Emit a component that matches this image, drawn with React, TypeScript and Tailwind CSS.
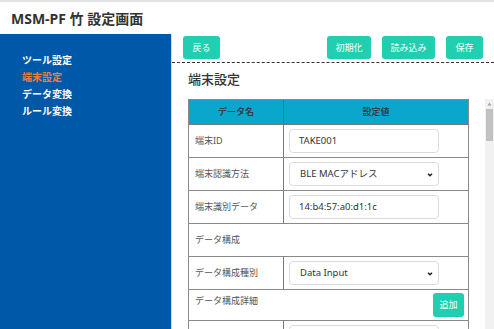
import React from 'react';

const font = "font-['Noto_Sans','Noto_Sans_CJK_JP',sans-serif]";

const Btn: React.FC<{ label: string; w: string }> = ({ label, w }) => (
  <button className={`${w} h-[23px] rounded-[3px] bg-[#1fcfaf] text-[9px] leading-none text-white`}>{label}</button>
);

const Chevron = () => (
  <svg width="6" height="4" viewBox="0 0 6 4" className="absolute right-[5px] top-[10px]">
    <path d="M1 0.8l2 2 2-2" fill="none" stroke="#222" strokeWidth="1.5" />
  </svg>
);

const Field: React.FC<{ value: string; select?: boolean }> = ({ value, select }) => (
  <div className="relative flex h-[24px] w-[150px] items-center rounded-[4px] border border-[#dcdcdc] pl-[9px] text-[9.5px] text-[#333]">
    <span className={select ? 'pl-[1px]' : ''}>{value}</span>
    {select && <Chevron />}
  </div>
);

const Row: React.FC<{ label: string; children?: React.ReactNode }> = ({ label, children }) => (
  <div className="flex h-[33px] border-b border-[#8a8a8a]">
    <div className="flex w-[95px] items-center border-r border-[#777] pl-[6px] text-[9px] text-[#555]">{label}</div>
    <div className="flex flex-1 items-center pl-[5px]">{children}</div>
  </div>
);

export default function App() {
  return (
    <div className={`flex h-[329px] w-[494px] flex-col overflow-hidden bg-white ${font}`}>
      <header className="flex h-[34px] items-center border-t-2 border-[#e2e2e2] pl-[11px]">
        <h1 className="text-[14px] font-bold text-[#333]">MSM-PF 竹 設定画面</h1>
      </header>

      <div className="flex min-h-0 flex-1">
        <aside className="flex w-[172px] flex-col border-r border-[#d6d6d6] bg-[#0059a8] pl-[22px] pt-[18px]">
          {['ツール設定', '端末設定', 'データ変換', 'ルール変換'].map((item) => (
            <div
              key={item}
              className={`text-[10px] font-bold leading-[17px] ${item === '端末設定' ? 'text-[#f27a45]' : 'text-white'}`}
            >
              {item}
            </div>
          ))}
        </aside>

        <main className="flex min-w-0 flex-1 flex-col">
          <div className="flex gap-[11px] border-b border-dashed border-[#333] px-[11px] pb-[3px] pt-[2px]">
            <Btn label="戻る" w="w-[37px]" />
            <div className="flex-1" />
            <Btn label="初期化" w="w-[44px]" />
            <Btn label="読み込み" w="w-[53px]" />
            <Btn label="保存" w="w-[37px]" />
          </div>

          <h2 className="pl-[16px] pt-[8px] text-[13px] font-medium leading-[16px] text-[#333]">端末設定</h2>

          <div className="mt-[12px] flex min-h-0 flex-1">
            <div className="flex-1 overflow-hidden px-[16px]">
              <div className="border-x border-t border-[#8a8a8a]">
                <div className="flex h-[25px] border-b border-[#777] bg-[#0aa6cb] text-[9px] font-medium text-[#333]">
                  <div className="flex w-[95px] items-center justify-center border-r border-[#666]">データ名</div>
                  <div className="flex flex-1 items-center justify-center">設定値</div>
                </div>
                <Row label="端末ID">
                  <Field value="TAKE001" />
                </Row>
                <Row label="端末認識方法">
                  <Field value="BLE MACアドレス" select />
                </Row>
                <Row label="端末識別データ">
                  <Field value="14:b4:57:a0:d1:1c" />
                </Row>
                <div className="flex h-[33px] items-center border-b border-[#8a8a8a] pl-[6px] text-[9px] text-[#555]">
                  データ構成
                </div>
                <Row label="データ構成種別">
                  <Field value="Data Input" select />
                </Row>
                <div className="flex h-[31px] items-start justify-between border-b border-[#8a8a8a] pl-[6px] pr-[4px] pt-[3px]">
                  <span className="mt-[1px] text-[9px] leading-[14px] text-[#555]">データ構成詳細</span>
                  <button className="h-[24px] w-[31px] rounded-[3px] bg-[#1fcfaf] text-[9px] text-white">追加</button>
                </div>
                <Row label="">
                  <Field value="" />
                </Row>
              </div>
            </div>

            <div className="flex w-[9px] flex-col items-center bg-[#f1f1f1] pt-[3px]">
              <svg width="5" height="4" viewBox="0 0 5 4">
                <path d="M2.5 0.5L4.5 3.5H0.5Z" fill="#a3a3a3" />
              </svg>
              <div className="mt-[3px] h-[32px] w-[7px] bg-[#c1c1c1]" />
            </div>
          </div>
        </main>
      </div>
    </div>
  );
}
